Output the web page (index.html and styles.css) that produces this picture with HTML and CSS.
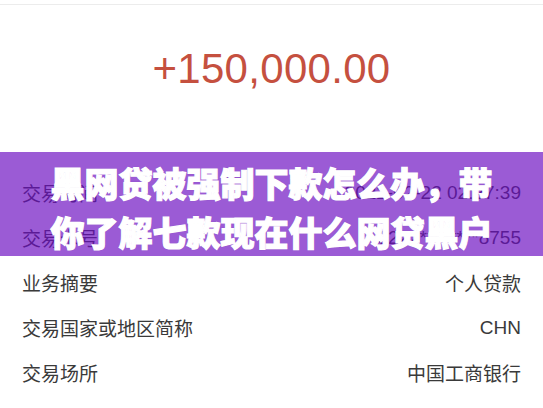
FILE: index.html
```html
<!DOCTYPE html>
<html lang="zh-CN">
<head>
<meta charset="utf-8">
<title>交易详情</title>
<link rel="stylesheet" href="styles.css">
</head>
<body>
<div class="page">
  <div class="top-rule"></div>
  <div class="header">
    <div class="amount">+150,000.00</div>
  </div>
  <div class="details">
    <div class="row"><span class="label">交易时间</span><span class="value">2022-02-22 02:27:39</span></div>
    <div class="row"><span class="label">交易卡号</span><span class="value">6222********8755</span></div>
    <div class="row"><span class="label">业务摘要</span><span class="value">个人贷款</span></div>
    <div class="row"><span class="label">交易国家或地区简称</span><span class="value">CHN</span></div>
    <div class="row"><span class="label">交易场所</span><span class="value">中国工商银行</span></div>
    <div class="row"><span class="label">交易金额</span><span class="value">150,000.00</span></div>
    <div class="banner">
      <div class="banner-title">黑网贷被强制下款怎么办，带<br>你了解七款现在什么网贷黑户</div>
    </div>
  </div>
</div>
</body>
</html>
```
FILE: styles.css
```css
html, body {
  margin: 0;
  padding: 0;
  background: #ffffff;
}
.page {
  width: 543px;
  height: 408px;
  overflow: hidden;
  font-family: "Liberation Sans", "Noto Sans CJK SC", sans-serif;
}
.top-rule {
  height: 1px;
  margin-top: 4px;
  background: #ececec;
}
.header {
  height: 165px;
  display: flex;
  justify-content: center;
  align-items: flex-start;
}
.amount {
  margin-top: 39px;
  font-size: 42px;
  line-height: 50px;
  color: #c5503f;
  letter-spacing: 0.3px;
}
.details {
  position: relative;
}
.row {
  height: 45px;
  display: flex;
  justify-content: space-between;
  align-items: center;
  padding: 0 22px;
  font-size: 19px;
  color: #3a3a3a;
}
.banner {
  position: absolute;
  left: 0;
  right: 0;
  top: -18px;
  height: 104px;
  box-sizing: border-box;
  padding-top: 6px;
  background: rgba(108, 14, 193, 0.68);
  display: flex;
  justify-content: center;
}
.banner-title {
  font-family: "Noto Sans CJK SC", sans-serif;
  font-weight: 900;
  font-size: 34px;
  line-height: 49px;
  color: #ffffff;
  text-align: center;
  -webkit-text-stroke: 1.2px #ffffff;
  text-shadow: 0 0 1px rgba(60, 20, 90, 0.5);
}
```
